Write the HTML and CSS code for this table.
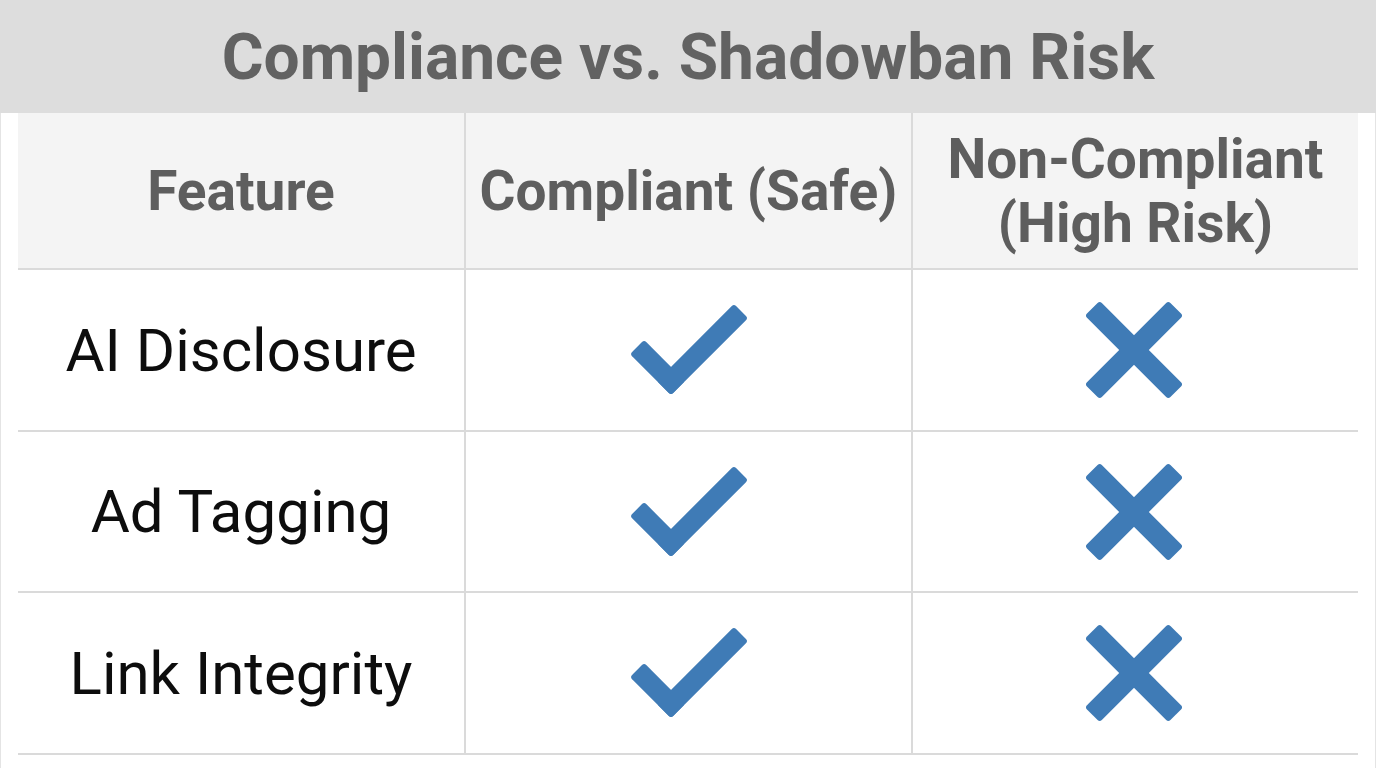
FILE: index.html
```html
<!DOCTYPE html>
<html lang="en">
<head>
<meta charset="utf-8">
<title>Compliance vs. Shadowban Risk</title>
<link rel="stylesheet" href="styles.css">
</head>
<body>
<header class="title-band">
  <h1 class="title">Compliance vs. Shadowban Risk</h1>
</header>
<main class="content">
  <div class="grid">
    <div class="cell head">Feature</div>
    <div class="cell head">Compliant (Safe)</div>
    <div class="cell head last">Non-Compliant<br>(High Risk)</div>

    <div class="cell label r1">AI Disclosure</div>
    <div class="cell r1"><svg class="icon check" viewBox="0 0 126 96" width="126" height="96"><g fill="#3f7bb6"><rect x="-48" y="-10" width="58" height="20" rx="3" transform="translate(45 79) rotate(45)"/><rect x="-10" y="-10" width="109" height="20" rx="3" transform="translate(45 79) rotate(-45)"/></g></svg></div>
    <div class="cell last r1"><svg class="icon cross" viewBox="0 0 100 100" width="100" height="100"><g fill="#3f7bb6"><rect x="-59" y="-10.5" width="118" height="21" rx="3" transform="translate(50 50) rotate(45)"/><rect x="-59" y="-10.5" width="118" height="21" rx="3" transform="translate(50 50) rotate(-45)"/></g></svg></div>

    <div class="cell label r2">Ad Tagging</div>
    <div class="cell r2"><svg class="icon check" viewBox="0 0 126 96" width="126" height="96"><g fill="#3f7bb6"><rect x="-48" y="-10" width="58" height="20" rx="3" transform="translate(45 79) rotate(45)"/><rect x="-10" y="-10" width="109" height="20" rx="3" transform="translate(45 79) rotate(-45)"/></g></svg></div>
    <div class="cell last r2"><svg class="icon cross" viewBox="0 0 100 100" width="100" height="100"><g fill="#3f7bb6"><rect x="-59" y="-10.5" width="118" height="21" rx="3" transform="translate(50 50) rotate(45)"/><rect x="-59" y="-10.5" width="118" height="21" rx="3" transform="translate(50 50) rotate(-45)"/></g></svg></div>

    <div class="cell label r3">Link Integrity</div>
    <div class="cell r3"><svg class="icon check" viewBox="0 0 126 96" width="126" height="96"><g fill="#3f7bb6"><rect x="-48" y="-10" width="58" height="20" rx="3" transform="translate(45 79) rotate(45)"/><rect x="-10" y="-10" width="109" height="20" rx="3" transform="translate(45 79) rotate(-45)"/></g></svg></div>
    <div class="cell last r3"><svg class="icon cross" viewBox="0 0 100 100" width="100" height="100"><g fill="#3f7bb6"><rect x="-59" y="-10.5" width="118" height="21" rx="3" transform="translate(50 50) rotate(45)"/><rect x="-59" y="-10.5" width="118" height="21" rx="3" transform="translate(50 50) rotate(-45)"/></g></svg></div>
  </div>
</main>
</body>
</html>
```

FILE: styles.css
```css
* { box-sizing: border-box; }
html, body { margin: 0; padding: 0; }
body {
  width: 1376px;
  height: 768px;
  overflow: hidden;
  background: #ffffff;
  font-family: Roboto, "Liberation Sans", sans-serif;
}
.title-band {
  height: 113px;
  background: #dddddd;
  display: flex;
  align-items: center;
  justify-content: center;
}
.title {
  margin: 0;
  font-size: 64px;
  font-weight: 700;
  color: #626262;
  line-height: 1;
  padding-top: 2px;
}
.content {
  height: 655px;
  border-left: 1px solid #e4e4e4;
  border-right: 1px solid #e4e4e4;
  padding: 0 17px;
}
.grid {
  display: grid;
  grid-template-columns: 448px 447px 445px;
  grid-template-rows: 157px 162px 161px 162px;
}
.cell {
  display: flex;
  align-items: center;
  justify-content: center;
  text-align: center;
  border-bottom: 2px solid #dadada;
  border-right: 2px solid #dadada;
}
.cell.last { border-right: none; }
.head {
  background: #f4f4f4;
  color: #5e5e5e;
  font-weight: 700;
  font-size: 55px;
  line-height: 64px;
}
.label {
  color: #0d0d0d;
  font-size: 60px;
  font-weight: 400;
}
.icon { display: block; }
.cross { margin-right: 3px; }
```
